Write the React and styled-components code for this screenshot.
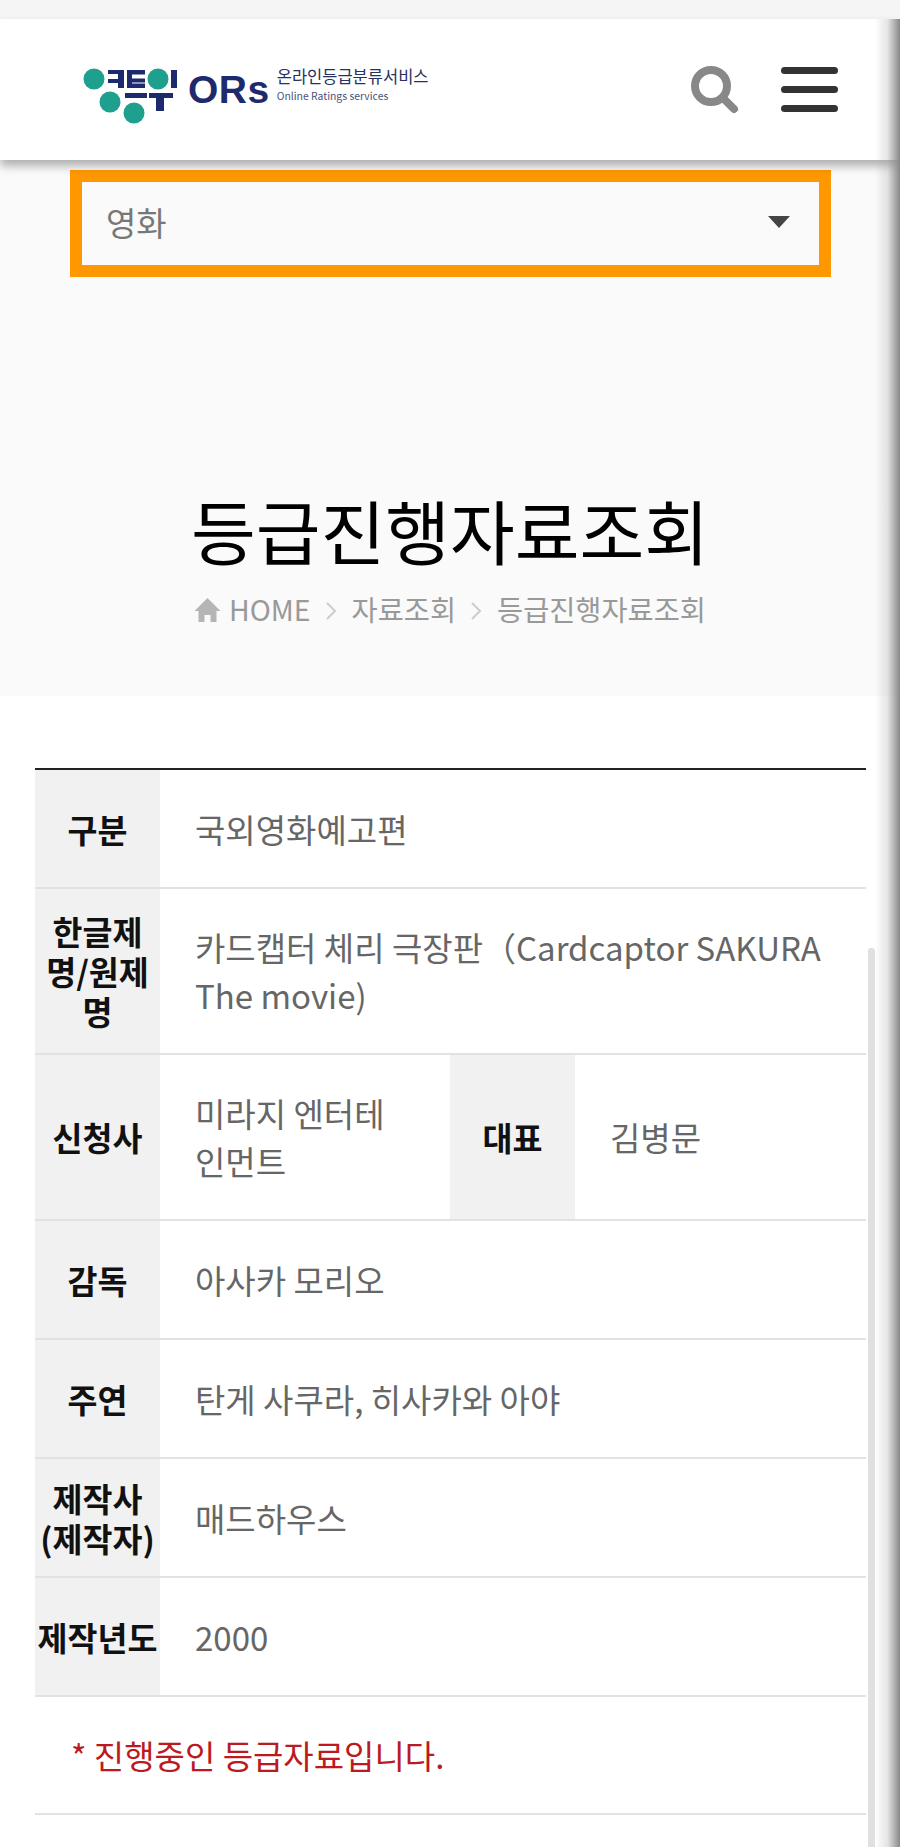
import React from "react";
import styled, { createGlobalStyle } from "styled-components";

const GlobalStyle = createGlobalStyle`
  html, body {
    margin: 0;
    padding: 0;
    background: #fff;
  }
  body {
    font-family: "Noto Sans CJK KR", "Noto Sans", sans-serif;
    overflow: hidden;
  }
`

const Page = styled.div`
  position: relative;
  width: 900px;
  height: 1847px;
  overflow: hidden;
  background: #fff;
`

const EdgeShadow = styled.div`
  position: absolute;
  top: 19px;
  right: 0;
  bottom: 0;
  width: 25px;
  z-index: 3;
  background: linear-gradient(to right, rgba(150, 150, 150, 0), rgba(150, 150, 150, 0.25) 50%, rgba(130, 130, 130, 0.95));
`

const ScrollThumb = styled.div`
  position: absolute;
  top: 948px;
  right: 25px;
  bottom: 0;
  width: 7px;
  z-index: 2;
  border-radius: 3px 3px 0 0;
  background: #e0e0e0;
`

const TopBand = styled.div`
  height: 19px;
  background: #f5f5f5;
`

const Hero = styled.section`
  padding: 0 0 68px;
  background: #fafafa;
`

const Header = styled.header`
  position: relative;
  z-index: 1;
  display: flex;
  align-items: center;
  height: 141px;
  padding: 0 62px 0 82px;
  background: #fff;
  box-shadow: 0 6px 9px rgba(0, 0, 0, 0.3);
`

const Logo = styled.div`
  display: flex;
  align-items: flex-start;
  align-self: flex-start;
  margin: 47px auto 0 0;
  height: 68px;
`

const LogoMark = styled.svg`
  display: block;
  width: 106px;
  height: 68px;
`

const LogoName = styled.span`
  font-family: "Liberation Sans", sans-serif;
  font-size: 39px;
  font-weight: 700;
  line-height: 34px;
  letter-spacing: 0.5px;
  color: #1d2a6e;
  margin-top: 7px;
`

const LogoText = styled.div`
  display: flex;
  flex-direction: column;
  margin: 1px 0 0 7px;
`

const LogoKo = styled.span`
  font-size: 16.5px;
  line-height: 18px;
  color: #26325f;
`

const LogoEn = styled.span`
  font-size: 10.4px;
  line-height: 14px;
  margin-top: 4px;
  color: #47527f;
`

const SearchIcon = styled.svg`
  display: block;
  width: 48px;
  height: 48px;
  margin-right: 42px;
  margin-top: 1px;
`

const MenuButton = styled.div`
  display: flex;
  flex-direction: column;
  gap: 12px;
  width: 57px;
`

const MenuBar = styled.span`
  display: block;
  height: 7px;
  border-radius: 4px;
  background: #333;
`

const Selector = styled.div`
  box-sizing: border-box;
  display: flex;
  align-items: center;
  justify-content: space-between;
  height: 107px;
  margin: 10px 69px 0 70px;
  padding: 0 29px 4px 24px;
  border: 12px solid #ff9800;
  font-size: 33px;
  color: #777;
`

const SelectorArrow = styled.span`
  width: 0;
  height: 0;
  border-left: 11px solid transparent;
  border-right: 11px solid transparent;
  border-top: 12px solid #444;
`

const Title = styled.h1`
  margin: 212px 0 0;
  font-size: 70.4px;
  font-weight: 400;
  line-height: 80px;
  text-align: center;
  color: #000;
`

const Crumbs = styled.nav`
  display: flex;
  align-items: center;
  justify-content: center;
  gap: 15px;
  margin-top: 19px;
  height: 40px;
  font-size: 28.4px;
  color: #999;
`

const CrumbHome = styled.span`
  display: flex;
  align-items: center;
  gap: 8px;
`

const HomeIcon = styled.svg`
  display: block;
  width: 27px;
  height: 24px;
  margin-top: 4px;
`

const CrumbArrow = styled.svg`
  display: block;
  width: 11px;
  height: 20px;
  margin-top: 6px;
`

const TableWrap = styled.div`
  padding: 72px 34px 0 35px;
`

const Table = styled.table`
  width: 100%;
  table-layout: fixed;
  border-collapse: collapse;
  border-top: 2px solid #222;
`

const Row = styled.tr`
  border-bottom: 2px solid #e2e2e2;
`

const Label = styled.th`
  height: 117px;
  padding: 0;
  background: #f1f1f1;
  font-size: 32.6px;
  font-weight: 700;
  line-height: 40px;
  text-align: center;
  color: #111;
`

const Value = styled.td`
  padding: 34px 40px 34px 35px;
  font-size: 33px;
  line-height: 48px;
  color: #666;
`

const Notice = styled.td`
  padding: 34px 36px;
  font-size: 33px;
  line-height: 48px;
  color: #bb1a20;
`

const rows = [
  { label: "구분", value: "국외영화예고편" },
  { label: <>한글제<br />명/원제<br />명</>, value: "카드캡터 체리 극장판（Cardcaptor SAKURA The movie)" },
  { label: "신청사", value: "미라지 엔터테인먼트", label2: "대표", value2: "김병문" },
  { label: "감독", value: "아사카 모리오" },
  { label: "주연", value: "탄게 사쿠라, 히사카와 아야" },
  { label: <>제작사<br />(제작자)</>, value: "매드하우스" },
  { label: "제작년도", value: "2000" },
]

const Arrow = () => (
  <CrumbArrow viewBox="0 0 11 20">
    <path d="M1 2l8 8-8 8" fill="none" stroke="#ccc" strokeWidth="2" />
  </CrumbArrow>
)

const App = () => (
  <Page>
    <GlobalStyle />
    <TopBand />
    <Hero>
      <Header>
        <Logo>
          <LogoMark viewBox="82 66 106 68">
            <g fill="#1fa08e">
              <circle cx="94" cy="79" r="10.5" />
              <circle cx="110" cy="102" r="10.5" />
              <circle cx="134" cy="113" r="10.5" />
              <circle cx="158" cy="79" r="10.5" />
            </g>
            <g fill="#1d2a6e">
              <path d="M108 70h16v18h-6v-5h-10v-4h10v-5h-10z" />
              <path d="M127 70h18v4.500h-13v4h13v4h-13v1h13v4.500h-18z" />
              <path d="M171 70h6v18h-6z" />
              <path d="M125 93h22v5h-22z" />
              <path d="M149 93h24v5h-9v13h-8v-13h-7z" />
            </g>
          </LogoMark>
          <LogoName>ORs</LogoName>
          <LogoText>
            <LogoKo>온라인등급분류서비스</LogoKo>
            <LogoEn>Online Ratings services</LogoEn>
          </LogoText>
        </Logo>
        <SearchIcon viewBox="0 0 48 48">
          <circle cx="20" cy="20" r="16" fill="none" stroke="#888" strokeWidth="8" />
          <path d="M32 32l11 11" stroke="#888" strokeWidth="8" strokeLinecap="round" />
        </SearchIcon>
        <MenuButton>
          <MenuBar />
          <MenuBar />
          <MenuBar />
        </MenuButton>
      </Header>
      <Selector>
        영화
        <SelectorArrow />
      </Selector>
      <Title>등급진행자료조회</Title>
      <Crumbs>
        <CrumbHome>
          <HomeIcon viewBox="0 0 26 24">
            <path d="M13 0L0 13h4v11h6v-7h6v7h6V13h4z" fill="#b5b5b5" />
          </HomeIcon>
          HOME
        </CrumbHome>
        <Arrow />
        <span>자료조회</span>
        <Arrow />
        <span>등급진행자료조회</span>
      </Crumbs>
    </Hero>
    <TableWrap>
      <Table>
        <colgroup>
          <col width="125" />
          <col width="290" />
          <col width="125" />
          <col />
        </colgroup>
        <tbody>
          {rows.map((row, i) => (
            <Row key={i}>
              <Label>{row.label}</Label>
              {row.label2 ? (
                <>
                  <Value>{row.value}</Value>
                  <Label>{row.label2}</Label>
                  <Value>{row.value2}</Value>
                </>
              ) : (
                <Value colSpan={3}>{row.value}</Value>
              )}
            </Row>
          ))}
          <Row>
            <Notice colSpan={4}>* 진행중인 등급자료입니다.</Notice>
          </Row>
        </tbody>
      </Table>
    </TableWrap>
    <ScrollThumb />
    <EdgeShadow />
  </Page>
)

export default App;
